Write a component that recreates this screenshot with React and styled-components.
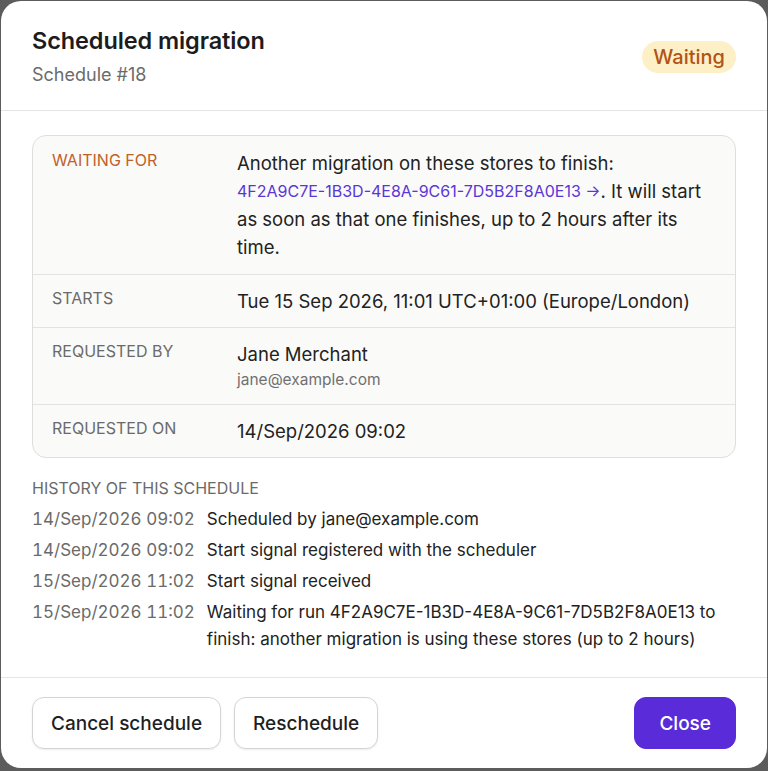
import React from 'react';
import styled, { createGlobalStyle } from 'styled-components';

const GlobalStyle = createGlobalStyle`
  html, body { margin: 0; padding: 0; background: #5c5c5c; }
  body { font-family: Inter, "Noto Sans", "Liberation Sans", sans-serif; color: #1f1f1f; }
  * { box-sizing: border-box; }
`;

const Backdrop = styled.div`
  height: 771px;
  padding: 1px 1px 3px 1px;
  display: flex;
`;

const Modal = styled.div`
  flex: 1;
  background: #fff;
  border-radius: 20px;
  display: flex;
  flex-direction: column;
  overflow: hidden;
`;

const Header = styled.header`
  display: flex;
  align-items: center;
  justify-content: space-between;
  padding: 26px 31px 23px;
  border-bottom: 1px solid #e4e4e4;
`;

const TitleBlock = styled.div`
  display: flex;
  flex-direction: column;
  gap: 8px;
`;

const Title = styled.h1`
  margin: 0;
  font-size: 23.5px;
  line-height: 28px;
  font-weight: 600;
  letter-spacing: -0.1px;
  color: #1c1c1c;
`;

const Subtitle = styled.div`
  font-size: 18px;
  line-height: 24px;
  color: #6b6b6b;
`;

const Badge = styled.span`
  background: #fdf0c6;
  color: #b25316;
  font-size: 20px;
  font-weight: 500;
  line-height: 32px;
  padding: 0 11px;
  border-radius: 16px;
`;

const Content = styled.main`
  flex: 1;
  padding: 24px 31px 20px;
  border-bottom: 1px solid #e4e4e4;
`;

const Card = styled.div`
  border: 1px solid #dedede;
  border-radius: 14px;
  background: #fafaf9;
  overflow: hidden;
`;

const Row = styled.div`
  display: grid;
  grid-template-columns: 185px 1fr;
  padding: ${p => (p.first ? '13px 20px 13px 19px' : '12px 20px 12px 19px')};
  border-top: ${p => (p.first ? 'none' : '1px solid #e3e3e3')};
`;

const Label = styled.div`
  font-size: 16px;
  line-height: 22px;
  text-transform: uppercase;
  color: ${p => (p.warn ? '#c0612a' : '#6a6a6a')};
`;

const Value = styled.div`
  font-size: 18.5px;
  line-height: 28px;
  color: #222;
`;

const Sub = styled.div`
  font-size: 15.5px;
  line-height: 24px;
  color: #707070;
`;

const Link = styled.a`
  display: inline-block;
  white-space: nowrap;
  color: #5b36d6;
  font-size: 16px;
  line-height: 28px;
  vertical-align: top;
  text-decoration: none;
`;

const History = styled.section`
  margin-top: 20px;
`;

const HistoryTitle = styled.div`
  font-size: 16px;
  line-height: 20px;
  text-transform: uppercase;
  color: #6a6a6a;
  margin-bottom: 8px;
`;

const List = styled.ul`
  list-style: none;
  margin: 0;
  padding: 0;
  display: flex;
  flex-direction: column;
  gap: 4px;
`;

const Item = styled.li`
  display: flex;
  gap: 12px;
  font-size: 17px;
  line-height: 27px;
`;

const When = styled.span`
  color: #6a6a6a;
  white-space: nowrap;
  font-variant-numeric: tabular-nums;
`;

const What = styled.span`
  color: #222;
`;

const Footer = styled.footer`
  flex-shrink: 0;
  display: flex;
  align-items: center;
  gap: 13px;
  padding: 19px 31px 19px;
`;

const Button = styled.button`
  font-family: inherit;
  font-size: 19px;
  font-weight: 500;
  height: 52px;
  padding: 0 ${p => (p.primary ? '24px' : '18px')};
  border-radius: 12px;
  border: 1px solid ${p => (p.primary ? '#5a2bd8' : '#d4d4d4')};
  background: ${p => (p.primary ? '#5a2bd8' : '#fff')};
  color: ${p => (p.primary ? '#fff' : '#1f1f1f')};
  box-shadow: ${p => (p.primary ? 'none' : '0 1px 2px rgba(0,0,0,0.08)')};
  margin-left: ${p => (p.primary ? 'auto' : '0')};
  cursor: pointer;
`;

const history = [
  ['14/Sep/2026 09:02', 'Scheduled by jane@example.com'],
  ['14/Sep/2026 09:02', 'Start signal registered with the scheduler'],
  ['15/Sep/2026 11:02', 'Start signal received'],
  ['15/Sep/2026 11:02', 'Waiting for run 4F2A9C7E-1B3D-4E8A-9C61-7D5B2F8A0E13 to finish: another migration is using these stores (up to 2 hours)'],
];

export default function App() {
  return (
    <>
      <GlobalStyle />
      <Backdrop>
        <Modal>
          <Header>
            <TitleBlock>
              <Title>Scheduled migration</Title>
              <Subtitle>Schedule #18</Subtitle>
            </TitleBlock>
            <Badge>Waiting</Badge>
          </Header>
          <Content>
            <Card>
              <Row first>
                <Label warn>Waiting for</Label>
                <Value>
                  Another migration on these stores to finish:{' '}
                  <Link href="#">4F2A9C7E-1B3D-4E8A-9C61-7D5B2F8A0E13 →</Link>. It will start
                  as soon as that one finishes, up to 2 hours after its time.
                </Value>
              </Row>
              <Row>
                <Label>Starts</Label>
                <Value>Tue 15 Sep 2026, 11:01 UTC+01:00 (Europe/London)</Value>
              </Row>
              <Row>
                <Label>Requested by</Label>
                <Value>
                  Jane Merchant
                  <Sub>jane@example.com</Sub>
                </Value>
              </Row>
              <Row>
                <Label>Requested on</Label>
                <Value>14/Sep/2026 09:02</Value>
              </Row>
            </Card>
            <History>
              <HistoryTitle>History of this schedule</HistoryTitle>
              <List>
                {history.map(([when, what], i) => (
                  <Item key={i}>
                    <When>{when}</When>
                    <What>{what}</What>
                  </Item>
                ))}
              </List>
            </History>
          </Content>
          <Footer>
            <Button>Cancel schedule</Button>
            <Button>Reschedule</Button>
            <Button primary>Close</Button>
          </Footer>
        </Modal>
      </Backdrop>
    </>
  );
}
